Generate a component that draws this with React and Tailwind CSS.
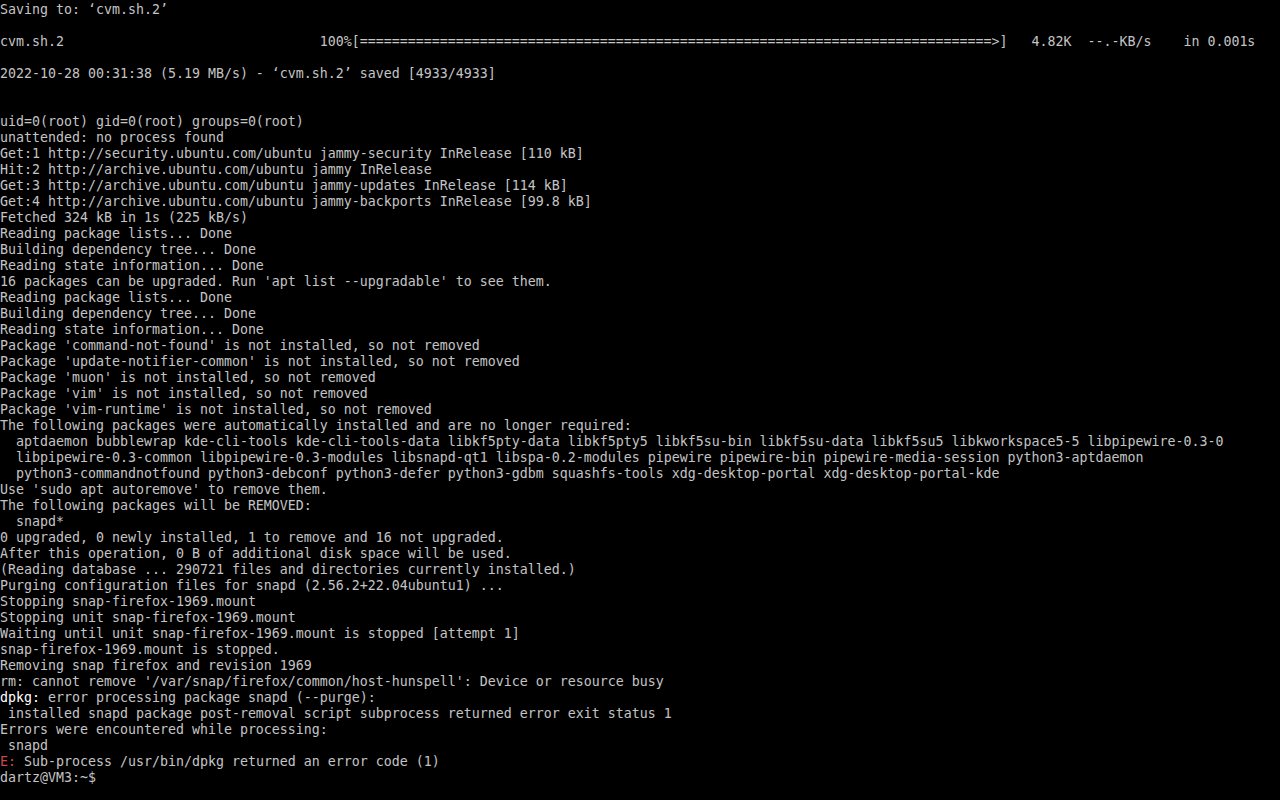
export default function App() {
  const bar = "=".repeat(79) + ">";
  const lines = [
    "Saving to: \u2018cvm.sh.2\u2019",
    "",
    "cvm.sh.2" + " ".repeat(32) + "100%[" + bar + "]   4.82K  --.-KB/s    in 0.001s",
    "",
    "2022-10-28 00:31:38 (5.19 MB/s) - \u2018cvm.sh.2\u2019 saved [4933/4933]",
    "",
    "",
    "uid=0(root) gid=0(root) groups=0(root)",
    "unattended: no process found",
    "Get:1 http://security.ubuntu.com/ubuntu jammy-security InRelease [110 kB]",
    "Hit:2 http://archive.ubuntu.com/ubuntu jammy InRelease",
    "Get:3 http://archive.ubuntu.com/ubuntu jammy-updates InRelease [114 kB]",
    "Get:4 http://archive.ubuntu.com/ubuntu jammy-backports InRelease [99.8 kB]",
    "Fetched 324 kB in 1s (225 kB/s)",
    "Reading package lists... Done",
    "Building dependency tree... Done",
    "Reading state information... Done",
    "16 packages can be upgraded. Run 'apt list --upgradable' to see them.",
    "Reading package lists... Done",
    "Building dependency tree... Done",
    "Reading state information... Done",
    "Package 'command-not-found' is not installed, so not removed",
    "Package 'update-notifier-common' is not installed, so not removed",
    "Package 'muon' is not installed, so not removed",
    "Package 'vim' is not installed, so not removed",
    "Package 'vim-runtime' is not installed, so not removed",
    "The following packages were automatically installed and are no longer required:",
    "  aptdaemon bubblewrap kde-cli-tools kde-cli-tools-data libkf5pty-data libkf5pty5 libkf5su-bin libkf5su-data libkf5su5 libkworkspace5-5 libpipewire-0.3-0",
    "  libpipewire-0.3-common libpipewire-0.3-modules libsnapd-qt1 libspa-0.2-modules pipewire pipewire-bin pipewire-media-session python3-aptdaemon",
    "  python3-commandnotfound python3-debconf python3-defer python3-gdbm squashfs-tools xdg-desktop-portal xdg-desktop-portal-kde",
    "Use 'sudo apt autoremove' to remove them.",
    "The following packages will be REMOVED:",
    "  snapd*",
    "0 upgraded, 0 newly installed, 1 to remove and 16 not upgraded.",
    "After this operation, 0 B of additional disk space will be used.",
    "(Reading database ... 290721 files and directories currently installed.)",
    "Purging configuration files for snapd (2.56.2+22.04ubuntu1) ...",
    "Stopping snap-firefox-1969.mount",
    "Stopping unit snap-firefox-1969.mount",
    "Waiting until unit snap-firefox-1969.mount is stopped [attempt 1]",
    "snap-firefox-1969.mount is stopped.",
    "Removing snap firefox and revision 1969",
    "rm: cannot remove '/var/snap/firefox/common/host-hunspell': Device or resource busy",
  ];
  return (
    <div
      className="w-[1280px] h-[800px] bg-black text-[#c4c4c4] overflow-hidden pt-[2px] text-[13.29px] leading-[16px] whitespace-pre"
      style={{ fontFamily: '"DejaVu Sans Mono", "Liberation Mono", monospace' }}
    >
      {lines.map((l, i) => (
        <div key={i} className="h-[16px]">{l}</div>
      ))}
      <div className="h-[16px]">
        <span className="text-white">dpkg:</span> error processing package snapd (--purge):
      </div>
      <div className="h-[16px]"> installed snapd package post-removal script subprocess returned error exit status 1</div>
      <div className="h-[16px]">Errors were encountered while processing:</div>
      <div className="h-[16px]"> snapd</div>
      <div className="h-[16px]">
        <span className="text-[#c94a4a]">E:</span> Sub-process /usr/bin/dpkg returned an error code (1)
      </div>
      <div className="h-[16px]">dartz@VM3:~$</div>
    </div>
  );
}
